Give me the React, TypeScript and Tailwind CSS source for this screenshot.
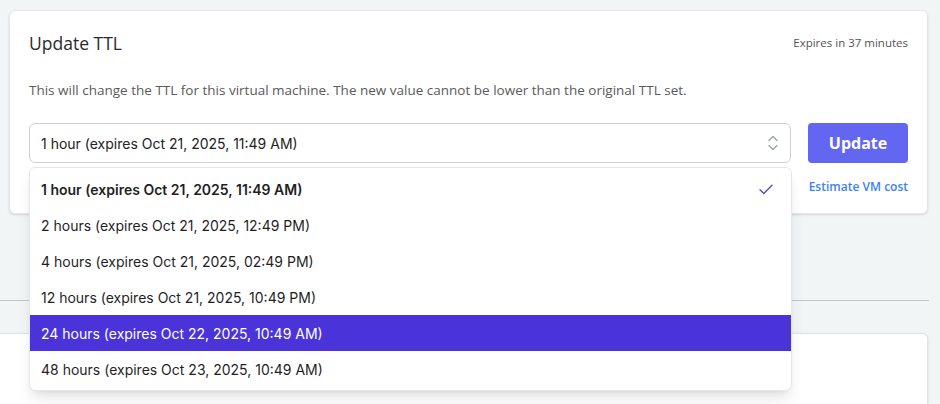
import React from "react";

const options = [
  "1 hour (expires Oct 21, 2025, 11:49 AM)",
  "2 hours (expires Oct 21, 2025, 12:49 PM)",
  "4 hours (expires Oct 21, 2025, 02:49 PM)",
  "12 hours (expires Oct 21, 2025, 10:49 PM)",
  "24 hours (expires Oct 22, 2025, 10:49 AM)",
  "48 hours (expires Oct 23, 2025, 10:49 AM)",
];

export default function App() {
  return (
    <div className="min-h-screen w-full bg-[#f2f5f6] pt-[10px] overflow-hidden" style={{ fontFamily: '"Open Sans", sans-serif' }}>
      <div className="ml-[9px] w-[919px] rounded-md bg-white border border-[#e4e7e9] shadow-sm pt-[20px] px-[19px] pb-[18px]">
        <div className="flex items-center justify-between">
          <h1 className="text-[17.5px] leading-[24px] font-medium text-[#2a2a2a]">Update TTL</h1>
          <span className="text-[11.5px] leading-[16px] text-[#555]">Expires in 37 minutes</span>
        </div>
        <p className="mt-[25px] text-[13.5px] leading-[20px] text-[#5a5a5a]">
          This will change the TTL for this virtual machine. The new value cannot be lower than the original TTL set.
        </p>
        <div className="mt-[23px] flex gap-[17px]">
          <div className="relative w-[763px]">
            <div
              className="h-[40px] flex items-center justify-between rounded-md border border-[#cdd1d6] bg-white pl-[11px] pr-[11px] text-[14px] text-[#222]"
              style={{ fontFamily: "Inter, sans-serif" }}
            >
              <span>{options[0]}</span>
              <svg width="12" height="16" viewBox="0 0 12 16" fill="none" stroke="#9ca3af" strokeWidth="1.4" strokeLinecap="round" strokeLinejoin="round">
                <path d="M2 10.5l4 4 4-4" />
                <path d="M2 5.5l4-4 4 4" />
              </svg>
            </div>
            <div
              className="absolute left-0 top-[44px] w-[763px] rounded-md border border-[#e5e7eb] bg-white py-[3px] shadow-lg z-10"
              style={{ fontFamily: "Inter, sans-serif" }}
            >
              {options.map((o, i) => (
                <div
                  key={o}
                  className={
                    "h-[36px] flex items-center justify-between pl-[11px] pr-[16px] text-[14px] " +
                    (i === 4 ? "bg-[#4a34d9] text-white" : "text-[#1f1f1f]") +
                    (i === 0 ? " font-semibold" : "")
                  }
                >
                  <span>{o}</span>
                  {i === 0 && (
                    <svg width="18" height="18" viewBox="0 0 24 24" fill="none" stroke="#4f46e5" strokeWidth="1.8" strokeLinecap="round" strokeLinejoin="round">
                      <path d="M4 13l5 5L20 7" />
                    </svg>
                  )}
                </div>
              ))}
            </div>
          </div>
          <div className="flex flex-col items-end">
            <button className="h-[40px] w-[100px] rounded-[4px] bg-[#6366f1] text-white text-[16px] font-bold">Update</button>
            <a className="mt-[16px] text-[12px] leading-[16px] font-semibold text-[#3b82f6]">Estimate VM cost</a>
          </div>
        </div>
      </div>
      <div className="mt-[86px] h-px w-[929px] bg-[#c4c8cb]" />
      <div className="mt-[32px] h-[80px] w-[928px] rounded-r-md bg-white border border-[#e1e4e6] border-l-0 shadow-sm" />
    </div>
  );
}
